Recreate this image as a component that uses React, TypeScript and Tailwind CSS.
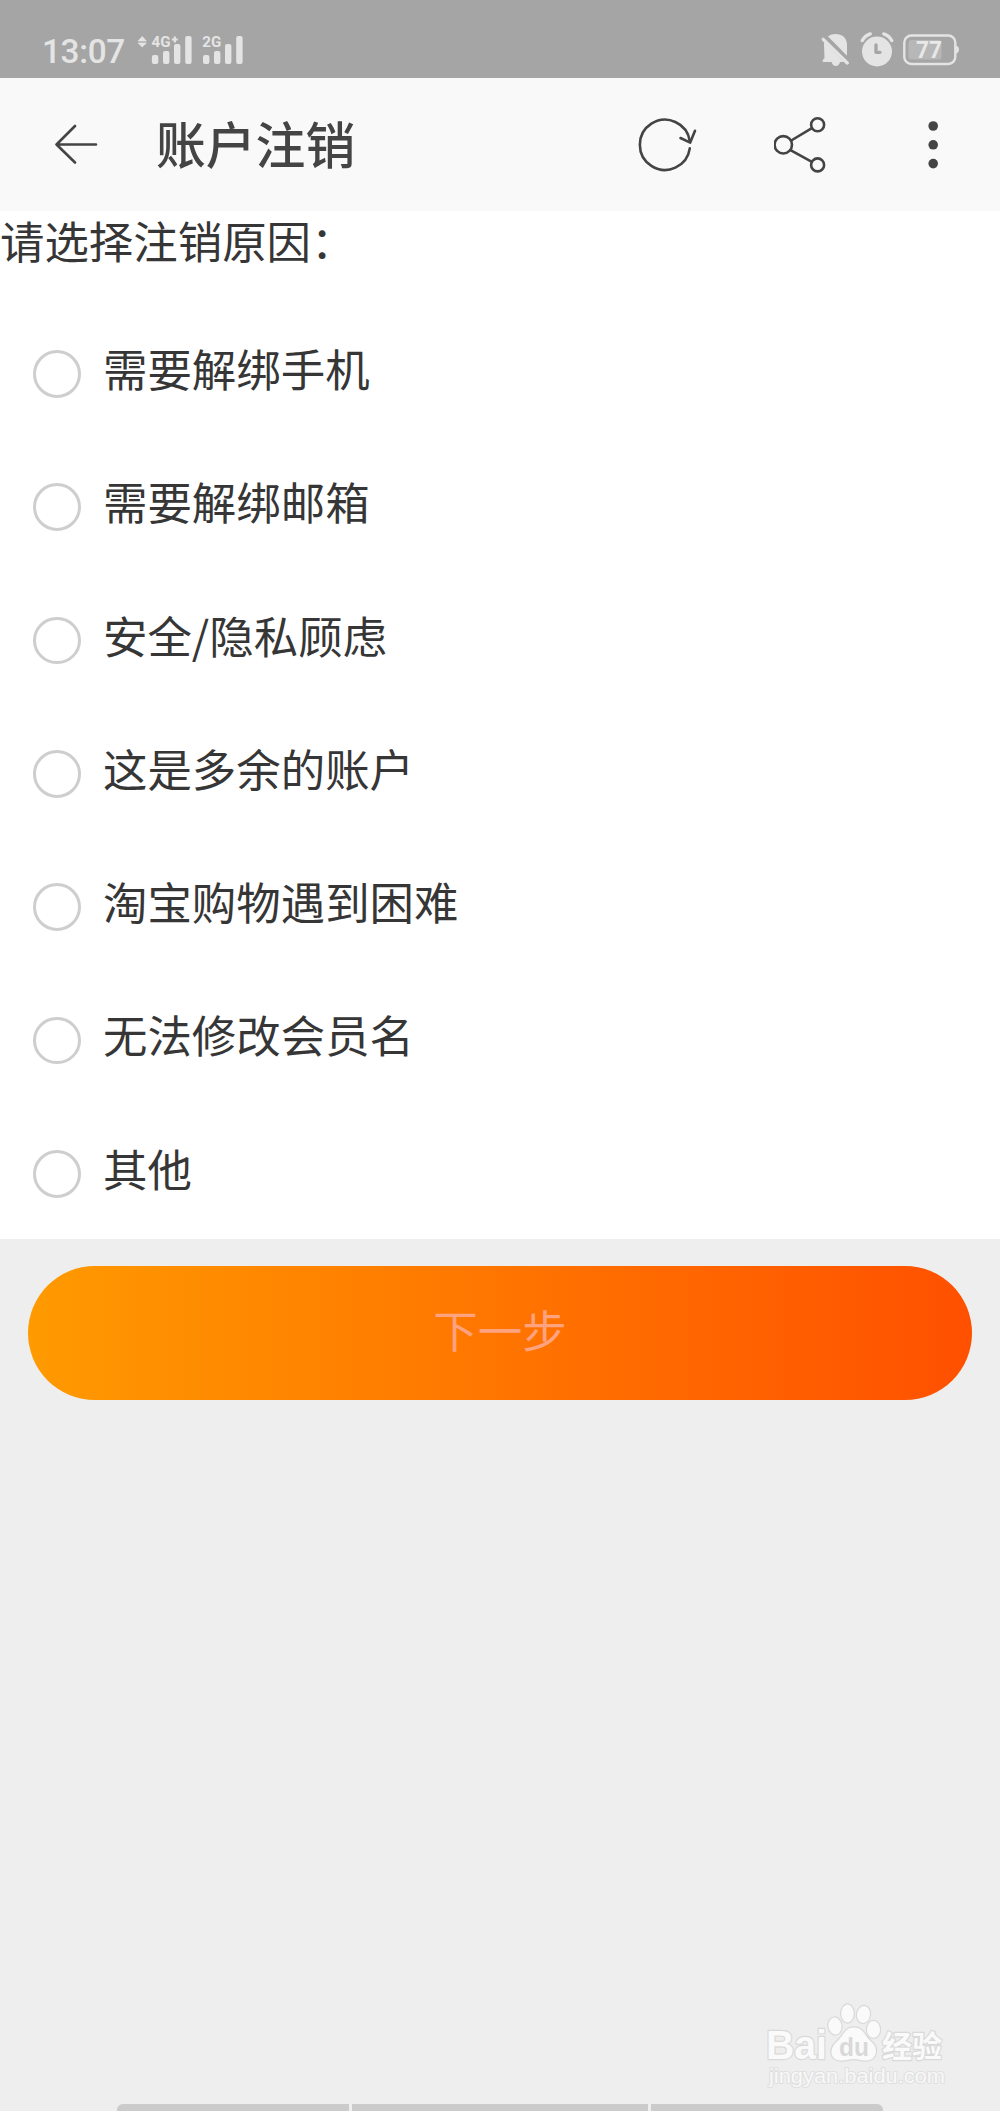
interface IconProps {
    className?: string;
}

const reasons: string[] = [
    "需要解绑手机",
    "需要解绑邮箱",
    "安全/隐私顾虑",
    "这是多余的账户",
    "淘宝购物遇到困难",
    "无法修改会员名",
    "其他",
];

const SignalIcon = () => (
    <svg width="107" height="32" viewBox="0 0 107 32" fill="#e4e4e4" className="mt-[34px] ml-[13px]">
        <path d="M4.2 2.5 8.3 7H0.2zM4.2 13 0.2 9h8.1z" stroke="#e4e4e4" strokeWidth="0.8" strokeLinejoin="round" />
        <text x="13.6" y="13" fontSize="15.5" fontWeight="700" fontFamily="Roboto, sans-serif" textLength="19" lengthAdjust="spacingAndGlyphs">4G</text>
        <path d="M36.8 2.5v6M33.8 5.5h6" stroke="#e4e4e4" strokeWidth="2.2" />
        <rect x="13.9" y="21" width="6.4" height="9" rx="2" />
        <rect x="25" y="17" width="6.4" height="13" rx="2" />
        <rect x="36" y="10" width="6.4" height="20" rx="2" />
        <rect x="47.2" y="2" width="6.4" height="28" rx="2" />
        <text x="64.3" y="13" fontSize="15.5" fontWeight="700" fontFamily="Roboto, sans-serif" textLength="19" lengthAdjust="spacingAndGlyphs">2G</text>
        <rect x="65" y="21" width="6.4" height="9" rx="2" />
        <rect x="76" y="17" width="6.4" height="13" rx="2" />
        <rect x="87" y="10" width="6.4" height="20" rx="2" />
        <rect x="98.2" y="2" width="6.4" height="28" rx="2" />
    </svg>
);

const MutedBellIcon = () => (
    <svg width="28" height="34" viewBox="0 0 28 34" fill="#e4e4e4">
        <path d="M3 13C3 6 8 2 14.5 2S26 6 26 12.5V26.5L27 28.5Q27.5 30 26 30H19Q18 34 14.8 34T10.6 30H3Q1 30 1.8 28L3.5 26z" />
        <path d="M3.5 5.5 27.5 30" stroke="#a5a5a5" strokeWidth="6.5" />
        <path d="M2.2 7.3 26.3 31" stroke="#e4e4e4" strokeWidth="3.2" strokeLinecap="round" />
    </svg>
);

const AlarmIcon = () => (
    <svg width="34" height="36" viewBox="0 0 34 36" fill="none" strokeLinecap="round">
        <circle cx="17" cy="19.5" r="15" fill="#e4e4e4" />
        <path d="M2.3 8.5Q5 3.7 10.2 1.9M31.7 8.5Q29 3.7 23.8 1.9" stroke="#e4e4e4" strokeWidth="3.4" />
        <path d="M16 13v7.3h4" stroke="#a5a5a5" strokeWidth="3.3" strokeLinejoin="round" />
    </svg>
);

const BatteryIcon = () => (
    <svg width="57" height="32" viewBox="0 0 57 32">
        <rect x="5.5" y="6" width="33" height="19.5" rx="3" fill="#b7b7b7" />
        <rect x="1.3" y="1.5" width="51" height="28.5" rx="7" fill="none" stroke="#e4e4e4" strokeWidth="2.4" />
        <path d="M53 11.5q3 1 3 4t-3 4z" fill="#e4e4e4" />
        <text x="13" y="24" fontSize="23" fontWeight="700" fontFamily="Roboto, sans-serif" fill="#e8e8e8" textLength="26" lengthAdjust="spacingAndGlyphs">77</text>
    </svg>
);

const BackIcon = () => (
    <svg width="46" height="42" viewBox="0 0 46 42" fill="none" stroke="#444" strokeWidth="2.6" strokeLinecap="round" strokeLinejoin="round">
        <path d="M41 20.5H1.5M20 2 1.5 20.5 20 38.5" />
    </svg>
);

const RefreshIcon = () => (
    <svg width="60" height="56" viewBox="0 0 60 56" fill="none" stroke="#444" strokeWidth="2.6" strokeLinecap="round" strokeLinejoin="round" className="overflow-visible">
        <path d="M49.8 31.4A25.1 25.1 0 1 1 49.8 24.2" />
        <path d="M40.5 21 50.2 25.6 55 13.8" />
    </svg>
);

const ShareIcon = () => (
    <svg width="54" height="56" viewBox="0 0 54 56" fill="none" stroke="#444" strokeWidth="2.6">
        <circle cx="9.3" cy="27.8" r="8.7" />
        <circle cx="43.6" cy="7.8" r="6.5" />
        <circle cx="43.6" cy="47.9" r="6.5" />
        <path d="M17.2 23.5 37.9 11.2M16.5 33.2 37.9 44.9" />
    </svg>
);

const MoreIcon = () => (
    <svg width="10" height="50" viewBox="0 0 10 50" fill="#444">
        <circle cx="5.2" cy="6" r="4.8" />
        <circle cx="5.2" cy="24.8" r="4.8" />
        <circle cx="5.2" cy="43.6" r="4.8" />
    </svg>
);

const Watermark = ({ className }: IconProps) => (
    <svg width="190" height="94" viewBox="0 0 190 94" fill="#fafafa" stroke="#d9d9d9" strokeWidth="2.4" strokeLinejoin="round" paintOrder="stroke" className={className}>
        <text x="1" y="63" fontSize="40" fontWeight="700" fontFamily="Liberation Sans, Arial, sans-serif" textLength="61" lengthAdjust="spacingAndGlyphs">Bai</text>
        <ellipse cx="70" cy="30" rx="6.5" ry="8.5" transform="rotate(-8 70 30)" />
        <ellipse cx="82.5" cy="17.5" rx="6.3" ry="9" />
        <ellipse cx="98.5" cy="18.5" rx="6.5" ry="8.5" transform="rotate(10 98.5 18.5)" />
        <ellipse cx="108.5" cy="33.5" rx="6.5" ry="8.5" />
        <path d="M89 31.5C99 31.5 99 40 106 45.5C114 52 112 63.5 102 64.5C96 65 94 63 89 63S81 65 75 64.5C65 63.5 64 53 71 46.5C79 40 79 31.5 89 31.5Z" />
        <text x="74" y="60" fontSize="25" fontWeight="700" fontFamily="Liberation Sans, Arial, sans-serif" fill="#d9d9d9" stroke="none" textLength="30" lengthAdjust="spacingAndGlyphs">du</text>
        <text x="117" y="61" fontSize="30" fontWeight="700" fontFamily="Noto Sans CJK SC, sans-serif">经验</text>
        <text x="4" y="87" fontSize="20" fontFamily="Liberation Sans, Arial, sans-serif" fill="#f8f8f8" stroke="#e0e0e0" strokeWidth="2" textLength="176" lengthAdjust="spacingAndGlyphs">jingyan.baidu.com</text>
    </svg>
);

const StatusBar = () => (
    <div className="flex h-[78px] justify-between bg-[#a5a5a5] pl-[42px] pr-10 text-[#e4e4e4]">
        <div className="flex">
            <span className="w-[83px] pt-8 font-[Roboto,sans-serif] text-[33.3px] leading-10 font-medium tracking-[-0.3px]">13:07</span>
            <SignalIcon />
        </div>
        <div className="flex items-start pt-8">
            <MutedBellIcon />
            <div className="ml-[11px]"><AlarmIcon /></div>
            <div className="mt-[2px] ml-[9px]"><BatteryIcon /></div>
        </div>
    </div>
);

const TitleBar = () => (
    <header className="flex h-[133px] items-center bg-[#f9f9f9] pl-[55px] text-[#444]">
        <button aria-label="返回"><BackIcon /></button>
        <h1 className="-mt-[4px] ml-[55px] flex-1 text-[49.8px] leading-none font-medium">账户注销</h1>
        <button aria-label="刷新"><RefreshIcon /></button>
        <button aria-label="分享" className="ml-[74px]"><ShareIcon /></button>
        <button aria-label="更多" className="ml-[100px] mr-[62px]"><MoreIcon /></button>
    </header>
);

const ReasonRow = ({ label }: { label: string }) => (
    <label className="flex h-[133.33px] items-center pl-[33.3px]">
        <input type="radio" name="reason" className="mt-[3px] size-[47.5px] appearance-none rounded-full border-3 border-[#cecece] bg-white" />
        <span className="-mt-[9px] ml-[22.2px]">{label}</span>
    </label>
);

export default function App() {
    return (
        <div className="relative flex h-[2111px] w-[1000px] flex-col overflow-hidden bg-[#eee] font-['Noto_Sans_CJK_SC',sans-serif]">
            <StatusBar />
            <TitleBar />
            <main className="h-[1028px] bg-white text-[44.44px] leading-[58px] text-[#363636]">
                <p className="h-[94.7px]">请选择注销原因：</p>
                {reasons.map((reason) => (
                    <ReasonRow key={reason} label={reason} />
                ))}
            </main>
            <button className="mx-[28px] mt-[27.4px] h-[133.33px] rounded-full bg-[linear-gradient(90deg,#ff9a00,#ff5000)] pb-[8px] text-[44.44px] leading-none text-[#ffa27f]">
                下一步
            </button>
            <Watermark className="absolute right-[45px] bottom-[21px]" />
            {/* navigation hint cut off by the bottom edge */}
            <div className="mx-[117px] mt-auto flex h-[7px] gap-[3px] overflow-hidden rounded-t-md">
                <span className="w-[232px] bg-[#cbcbcb]" />
                <span className="w-[296px] bg-[#cbcbcb]" />
                <span className="flex-1 bg-[#cbcbcb]" />
            </div>
        </div>
    );
}
